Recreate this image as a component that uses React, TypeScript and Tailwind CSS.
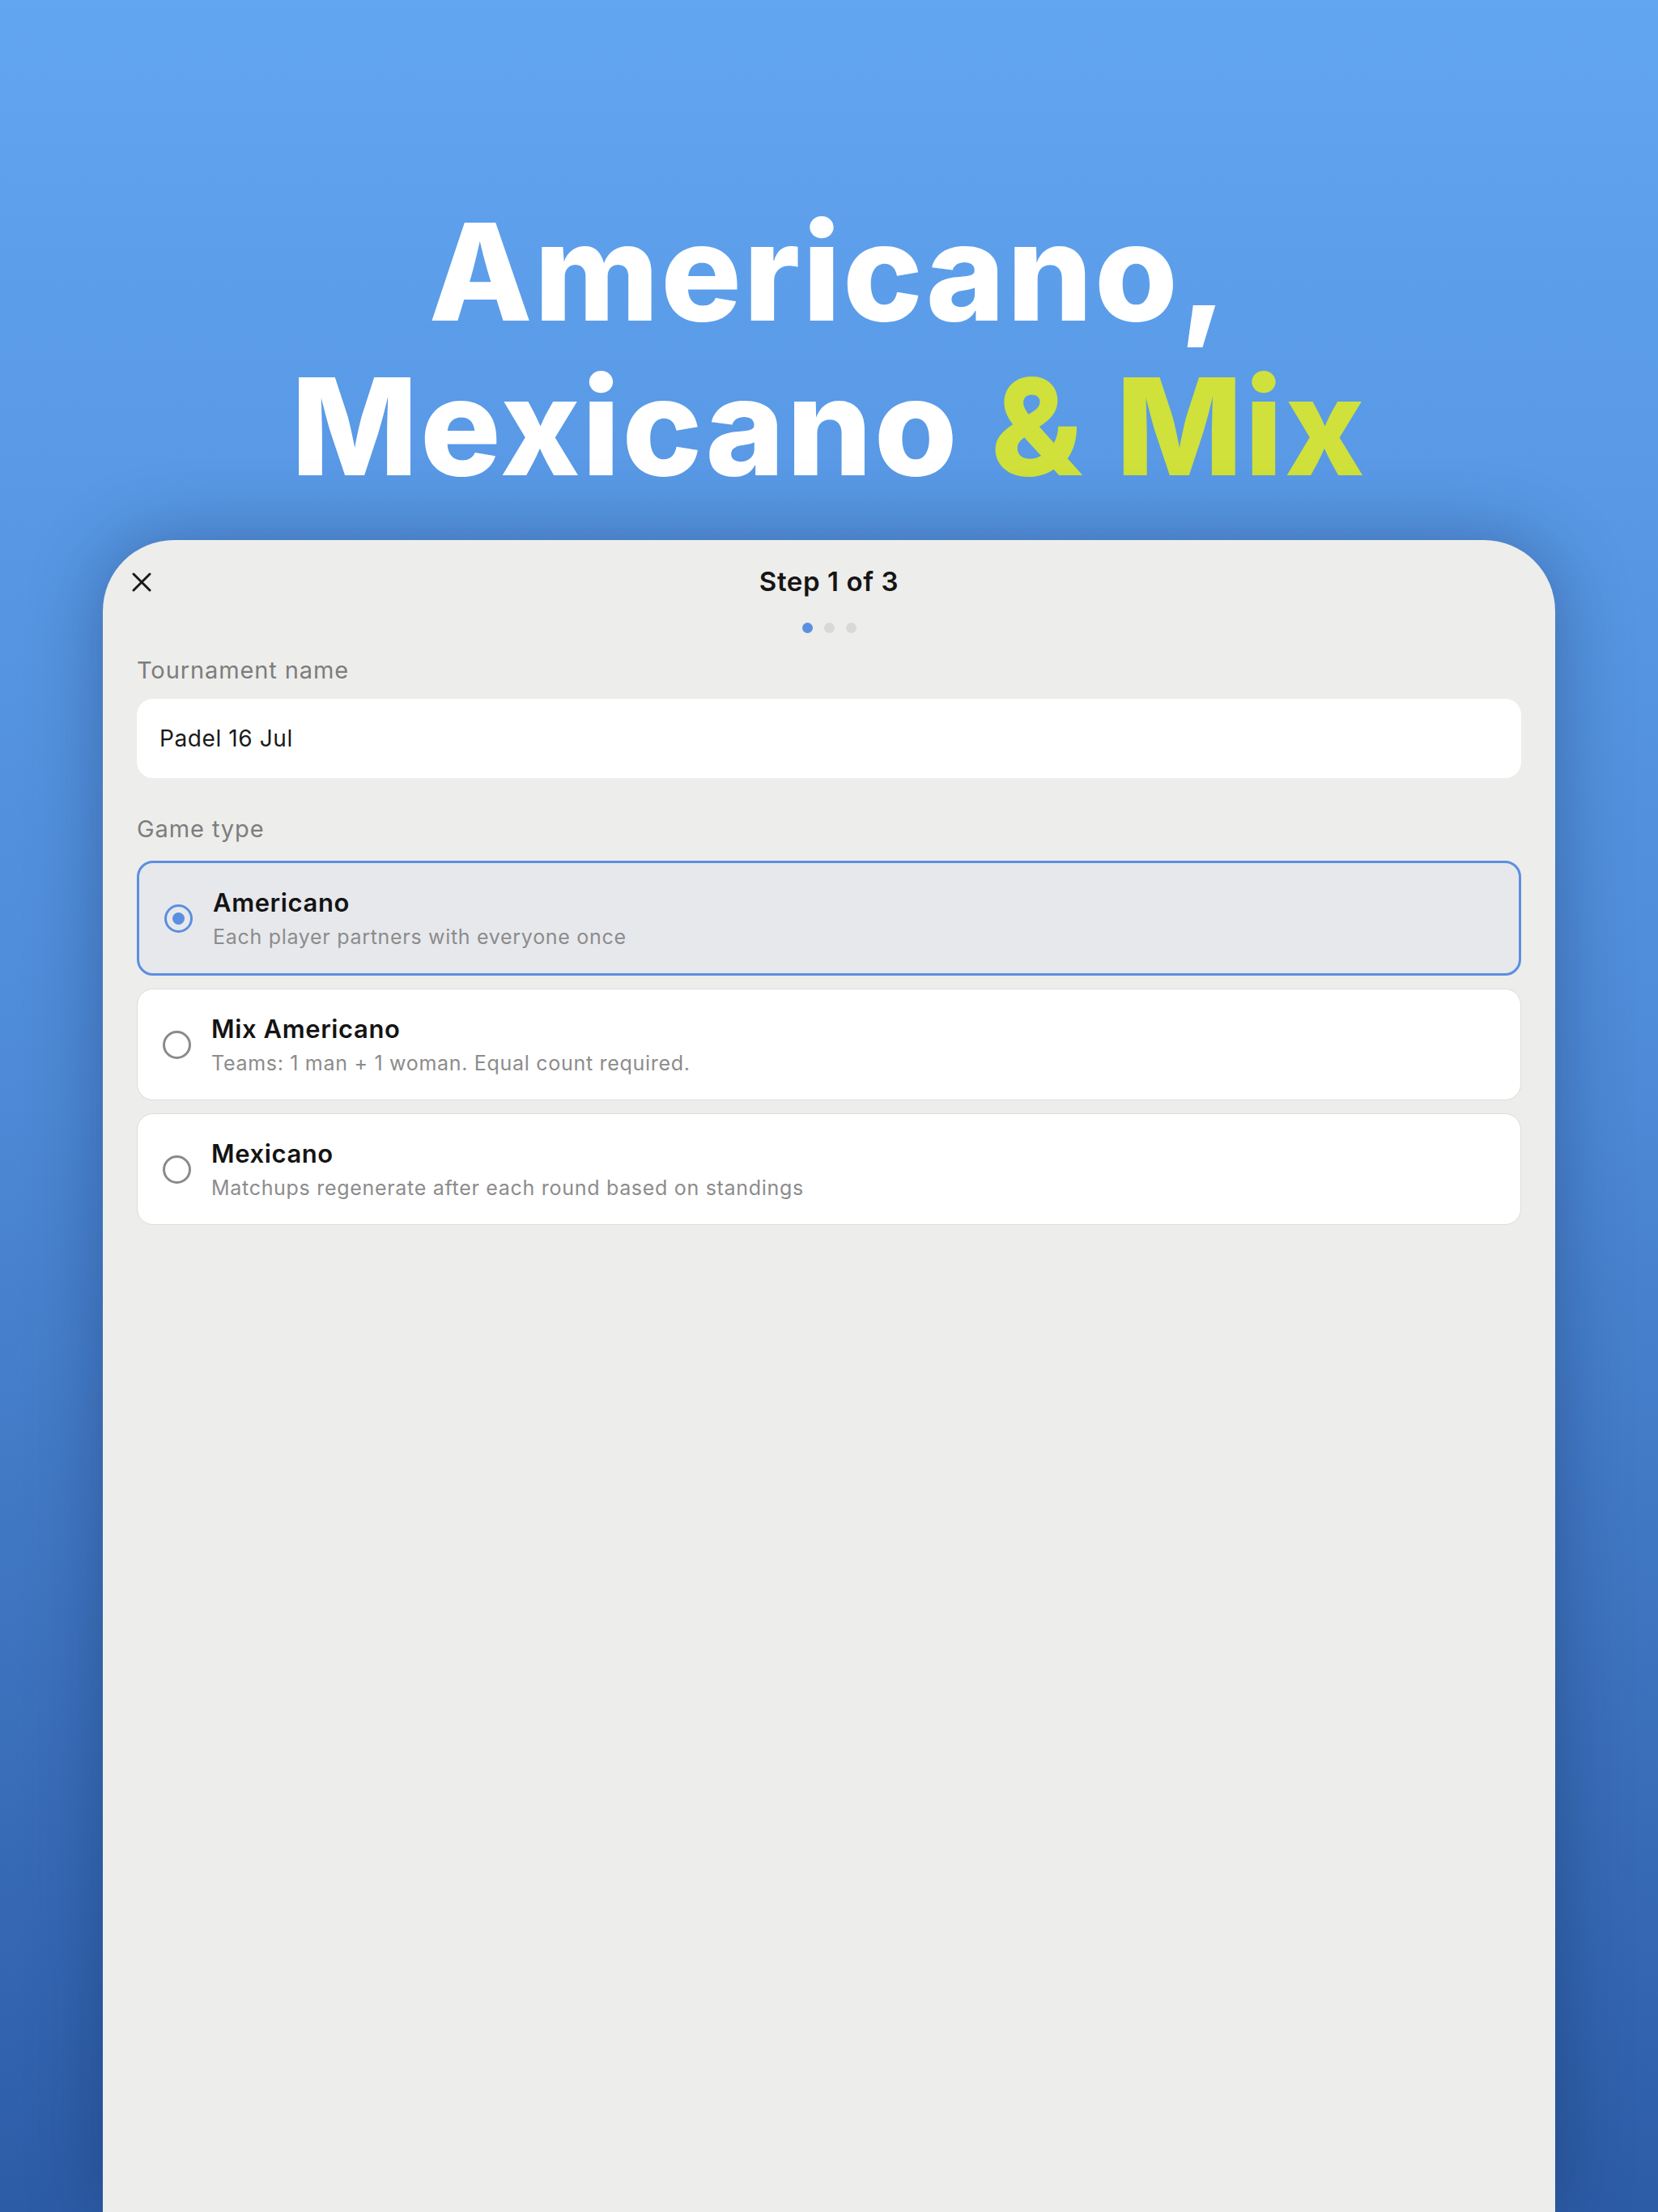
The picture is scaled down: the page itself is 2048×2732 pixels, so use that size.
import { useState } from 'react';

type GameType = {
    id: string;
    title: string;
    description: string;
};

const GAME_TYPES: GameType[] = [
    { id: 'americano', title: 'Americano', description: 'Each player partners with everyone once' },
    { id: 'mix', title: 'Mix Americano', description: 'Teams: 1 man + 1 woman. Equal count required.' },
    { id: 'mexicano', title: 'Mexicano', description: 'Matchups regenerate after each round based on standings' },
];

export default function App() {
    const [selected, setSelected] = useState('americano');
    const [name, setName] = useState('Padel 16 Jul');

    return (
        <div
            className="flex h-[2732px] w-full flex-col overflow-hidden bg-gradient-to-b from-[#62a5f1] via-[#4d89d6] to-[#2d5ca6]"
            style={{ fontFamily: 'Inter, "Noto Sans", sans-serif' }}
        >
            <h1 className="mt-[240px] text-center text-[166px] font-extrabold leading-[191px] tracking-[2.5px] text-white">
                Americano,
                <br />
                Mexicano <span className="text-[#cfe13a]">&amp; Mix</span>
            </h1>

            <div className="mx-[127px] mt-[45px] flex-1 rounded-t-[88px] bg-[#ededeb] px-[42px] shadow-[0_0_90px_rgba(10,30,70,0.35)]">
                {/* header */}
                <div className="relative mt-[30px] flex h-[44px] items-center justify-center">
                    <button className="absolute left-[-6px] top-1/2 -translate-y-1/2 p-0 text-[#1a1a1a]">
                        <svg width="24" height="24" viewBox="0 0 24 24" fill="none" stroke="currentColor" strokeWidth="3" strokeLinecap="round">
                            <path d="M2 2 L22 22 M22 2 L2 22" />
                        </svg>
                    </button>
                    <span className="text-[33px] font-semibold tracking-[0.6px] text-[#151515]">Step 1 of 3</span>
                </div>

                <div className="mt-[28px] flex justify-center gap-[14px]">
                    <span className="h-[13px] w-[13px] rounded-full bg-[#5b8fe0]" />
                    <span className="h-[13px] w-[13px] rounded-full bg-[#d8d8d8]" />
                    <span className="h-[13px] w-[13px] rounded-full bg-[#d8d8d8]" />
                </div>

                <label className="mt-[26px] block text-[29px] leading-[40px] tracking-[0.9px] text-[#7d7d7d]">Tournament name</label>
                <input
                    value={name}
                    onChange={(e) => setName(e.target.value)}
                    className="mt-[15px] block h-[98px] w-full rounded-[20px] bg-white px-[28px] text-[28px] tracking-[0.6px] text-[#1a1a1a] outline-none"
                />

                <div className="mt-[43px] text-[29px] leading-[40px] tracking-[0.9px] text-[#7d7d7d]">Game type</div>

                <div className="mt-[19px] flex flex-col gap-[16px]">
                    {GAME_TYPES.map((type) => {
                        const isSelected = type.id === selected;
                        return (
                            <button
                                key={type.id}
                                onClick={() => setSelected(type.id)}
                                className={`flex w-full items-center rounded-[20px] py-[29px] pl-[31px] text-left ${isSelected
                                    ? 'border-[3px] border-[#5b8fe0] bg-[#e7e8ec]'
                                    : 'border border-[#dcdcdc] bg-white'
                                    }`}
                            >
                                <span
                                    className={`flex h-[35px] w-[35px] shrink-0 items-center justify-center rounded-full border-[3px] ${isSelected ? 'border-[#5b8fe0]' : 'border-[#8a8a8a]'}`}
                                >
                                    {isSelected && <span className="h-[15px] w-[15px] rounded-full bg-[#5b8fe0]" />}
                                </span>
                                <span className="ml-[25px] flex flex-col">
                                    <span className="text-[31px] font-semibold leading-[40px] tracking-[0.6px] text-[#141414]">{type.title}</span>
                                    <span className="mt-[6px] text-[25px] leading-[32px] tracking-[0.7px] text-[#8c8c8c]">{type.description}</span>
                                </span>
                            </button>
                        );
                    })}
                </div>
            </div>
        </div>
    );
}
